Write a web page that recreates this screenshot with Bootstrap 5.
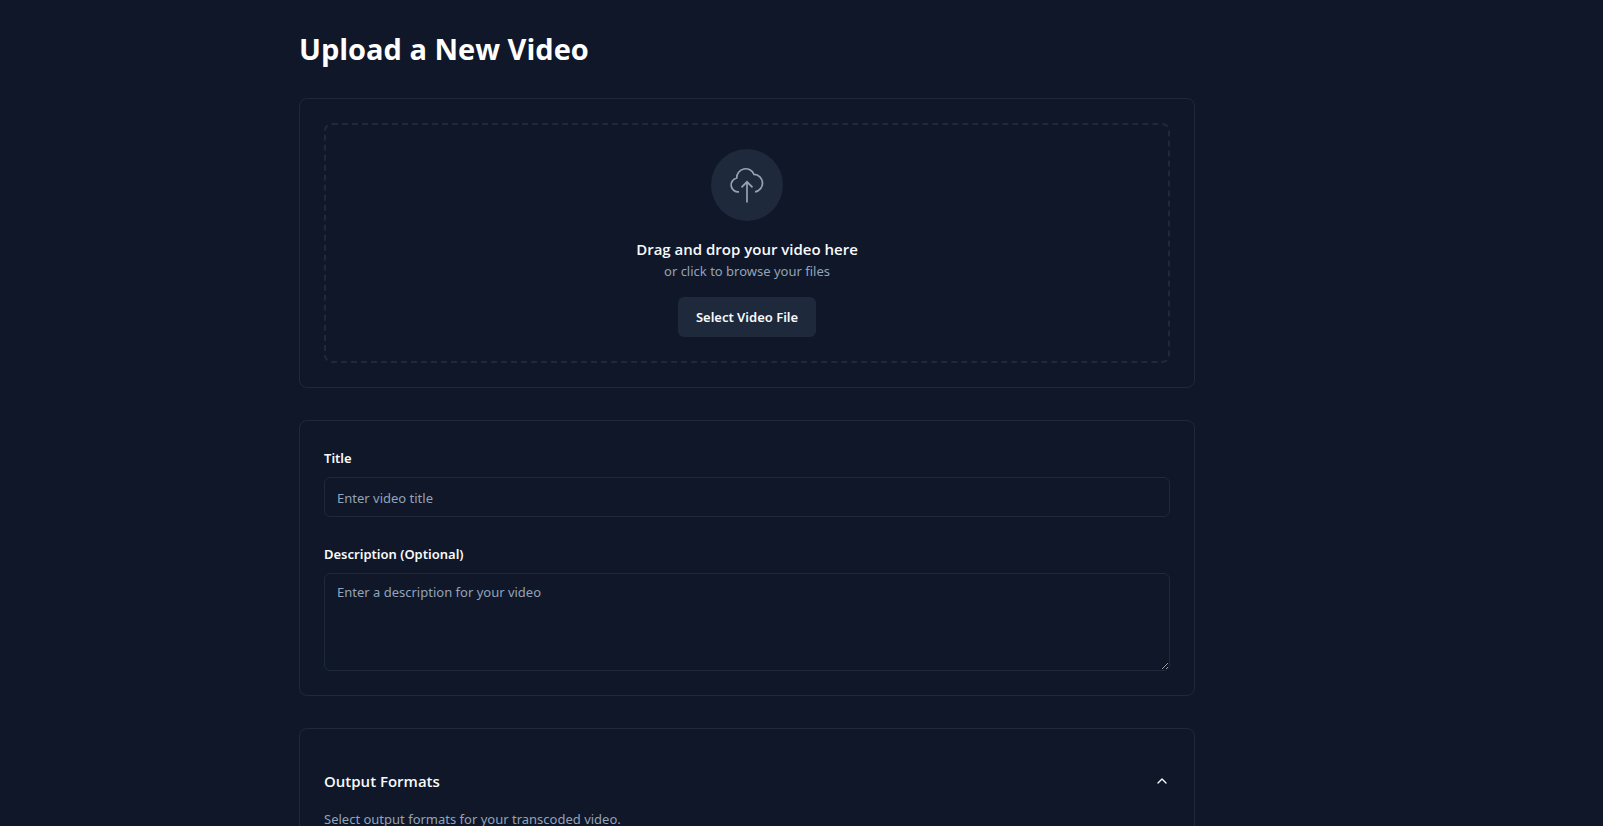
<!DOCTYPE html>
<html lang="en" data-bs-theme="dark">
<head>
<meta charset="utf-8">
<meta name="viewport" content="width=device-width, initial-scale=1">
<title>Upload a New Video</title>
<link href="https://cdn.jsdelivr.net/npm/bootstrap@5.3.0/dist/css/bootstrap.min.css" rel="stylesheet">
<style>
:root { --page: #0f1729; --line: #1e293b; --ink: #f8fafc; --muted: #94a3b8; }
body { background: var(--page); color: var(--ink); font-family: "Segoe UI", "Noto Sans", sans-serif; font-size: 14px; line-height: 20px; }
.shell { max-width: 1494px; padding-top: 32px; }
.column { max-width: 896px; }
.page-title { font-family: "Segoe UI", "Open Sans", sans-serif; font-size: 29px; line-height: 34px; font-weight: 700; margin-bottom: 32px; }
.panel { background: transparent; border: 1px solid var(--line); border-radius: 8px; padding: 24px; margin-bottom: 32px; }
.dropzone { border: 2px dashed var(--line); border-radius: 8px; }
.icon-disc { width: 72px; height: 72px; background: var(--line); color: var(--muted); }
.strong-line { font-family: "Segoe UI", "Open Sans", sans-serif; font-size: 15px; line-height: 24px; font-weight: 600; }
.hint, .form-control::placeholder { color: var(--muted); opacity: 1; }
.hint, .form-control { font-size: 13px; line-height: 20px; }
.btn-pick { height: 40px; padding: 0 18px; border: 0; border-radius: 6px; font-size: 13px; line-height: 20px; font-weight: 600; background: var(--line); color: var(--ink); }
.btn-pick:hover { background: #28364b; color: var(--ink); }
.form-label { font-size: 13px; line-height: 22px; font-weight: 600; padding-top: 2px; }
.form-control, .form-control:focus { background: transparent; color: var(--ink); border: 1px solid var(--line); border-radius: 6px; padding: 8px 12px; }
input.form-control, input.form-control:focus { height: 40px; padding-top: 9px; padding-bottom: 7px; }
textarea.form-control { height: 98px; }
.toggle { background: none; border: 0; color: var(--ink); padding: 16px 0; }
</style>
</head>
<body>
<div class="vh-100 overflow-hidden">
<main class="shell">
<div class="column mx-auto">
  <h1 class="page-title">Upload a New Video</h1>

  <section class="panel">
    <div class="dropzone d-flex flex-column align-items-center p-4">
      <div class="icon-disc rounded-circle d-flex align-items-center justify-content-center mb-3">
        <svg width="40" height="40" viewBox="0 0 40 40" fill="none" stroke="currentColor" stroke-width="1.7" aria-hidden="true">
          <path d="M12 26.8A7 7 0 0 1 9.7 13A9 9 0 0 1 27 9.3A8.8 8.8 0 0 1 28 26.8"/>
          <path d="M20 37.5V17M14.5 22.3L20 16.8L25.5 22.3"/>
        </svg>
      </div>
      <div class="strong-line">Drag and drop your video here</div>
      <div class="hint mb-3">or click to browse your files</div>
      <button type="button" class="btn btn-pick">Select Video File</button>
    </div>
  </section>

  <form class="panel">
    <div class="mb-4">
      <label for="title" class="form-label d-block mb-2">Title</label>
      <input id="title" type="text" class="form-control" placeholder="Enter video title">
    </div>
    <div>
      <label for="description" class="form-label d-block mb-2">Description (Optional)</label>
      <textarea id="description" class="form-control d-block" placeholder="Enter a description for your video"></textarea>
    </div>
  </form>

  <section class="panel">
    <button type="button" class="toggle strong-line w-100 d-flex align-items-center justify-content-between" data-bs-toggle="collapse" data-bs-target="#formats" aria-expanded="true" aria-controls="formats">
      <span>Output Formats</span>
      <svg width="16" height="16" viewBox="0 0 24 24" fill="none" stroke="currentColor" stroke-width="2" stroke-linecap="round" stroke-linejoin="round" aria-hidden="true"><path d="M18 15l-6-6-6 6"/></svg>
    </button>
    <div id="formats" class="collapse show hint">Select output formats for your transcoded video.</div>
  </section>
</div>
</main>
</div>
<script src="https://cdn.jsdelivr.net/npm/bootstrap@5.3.0/dist/js/bootstrap.bundle.min.js"></script>
</body>
</html>
